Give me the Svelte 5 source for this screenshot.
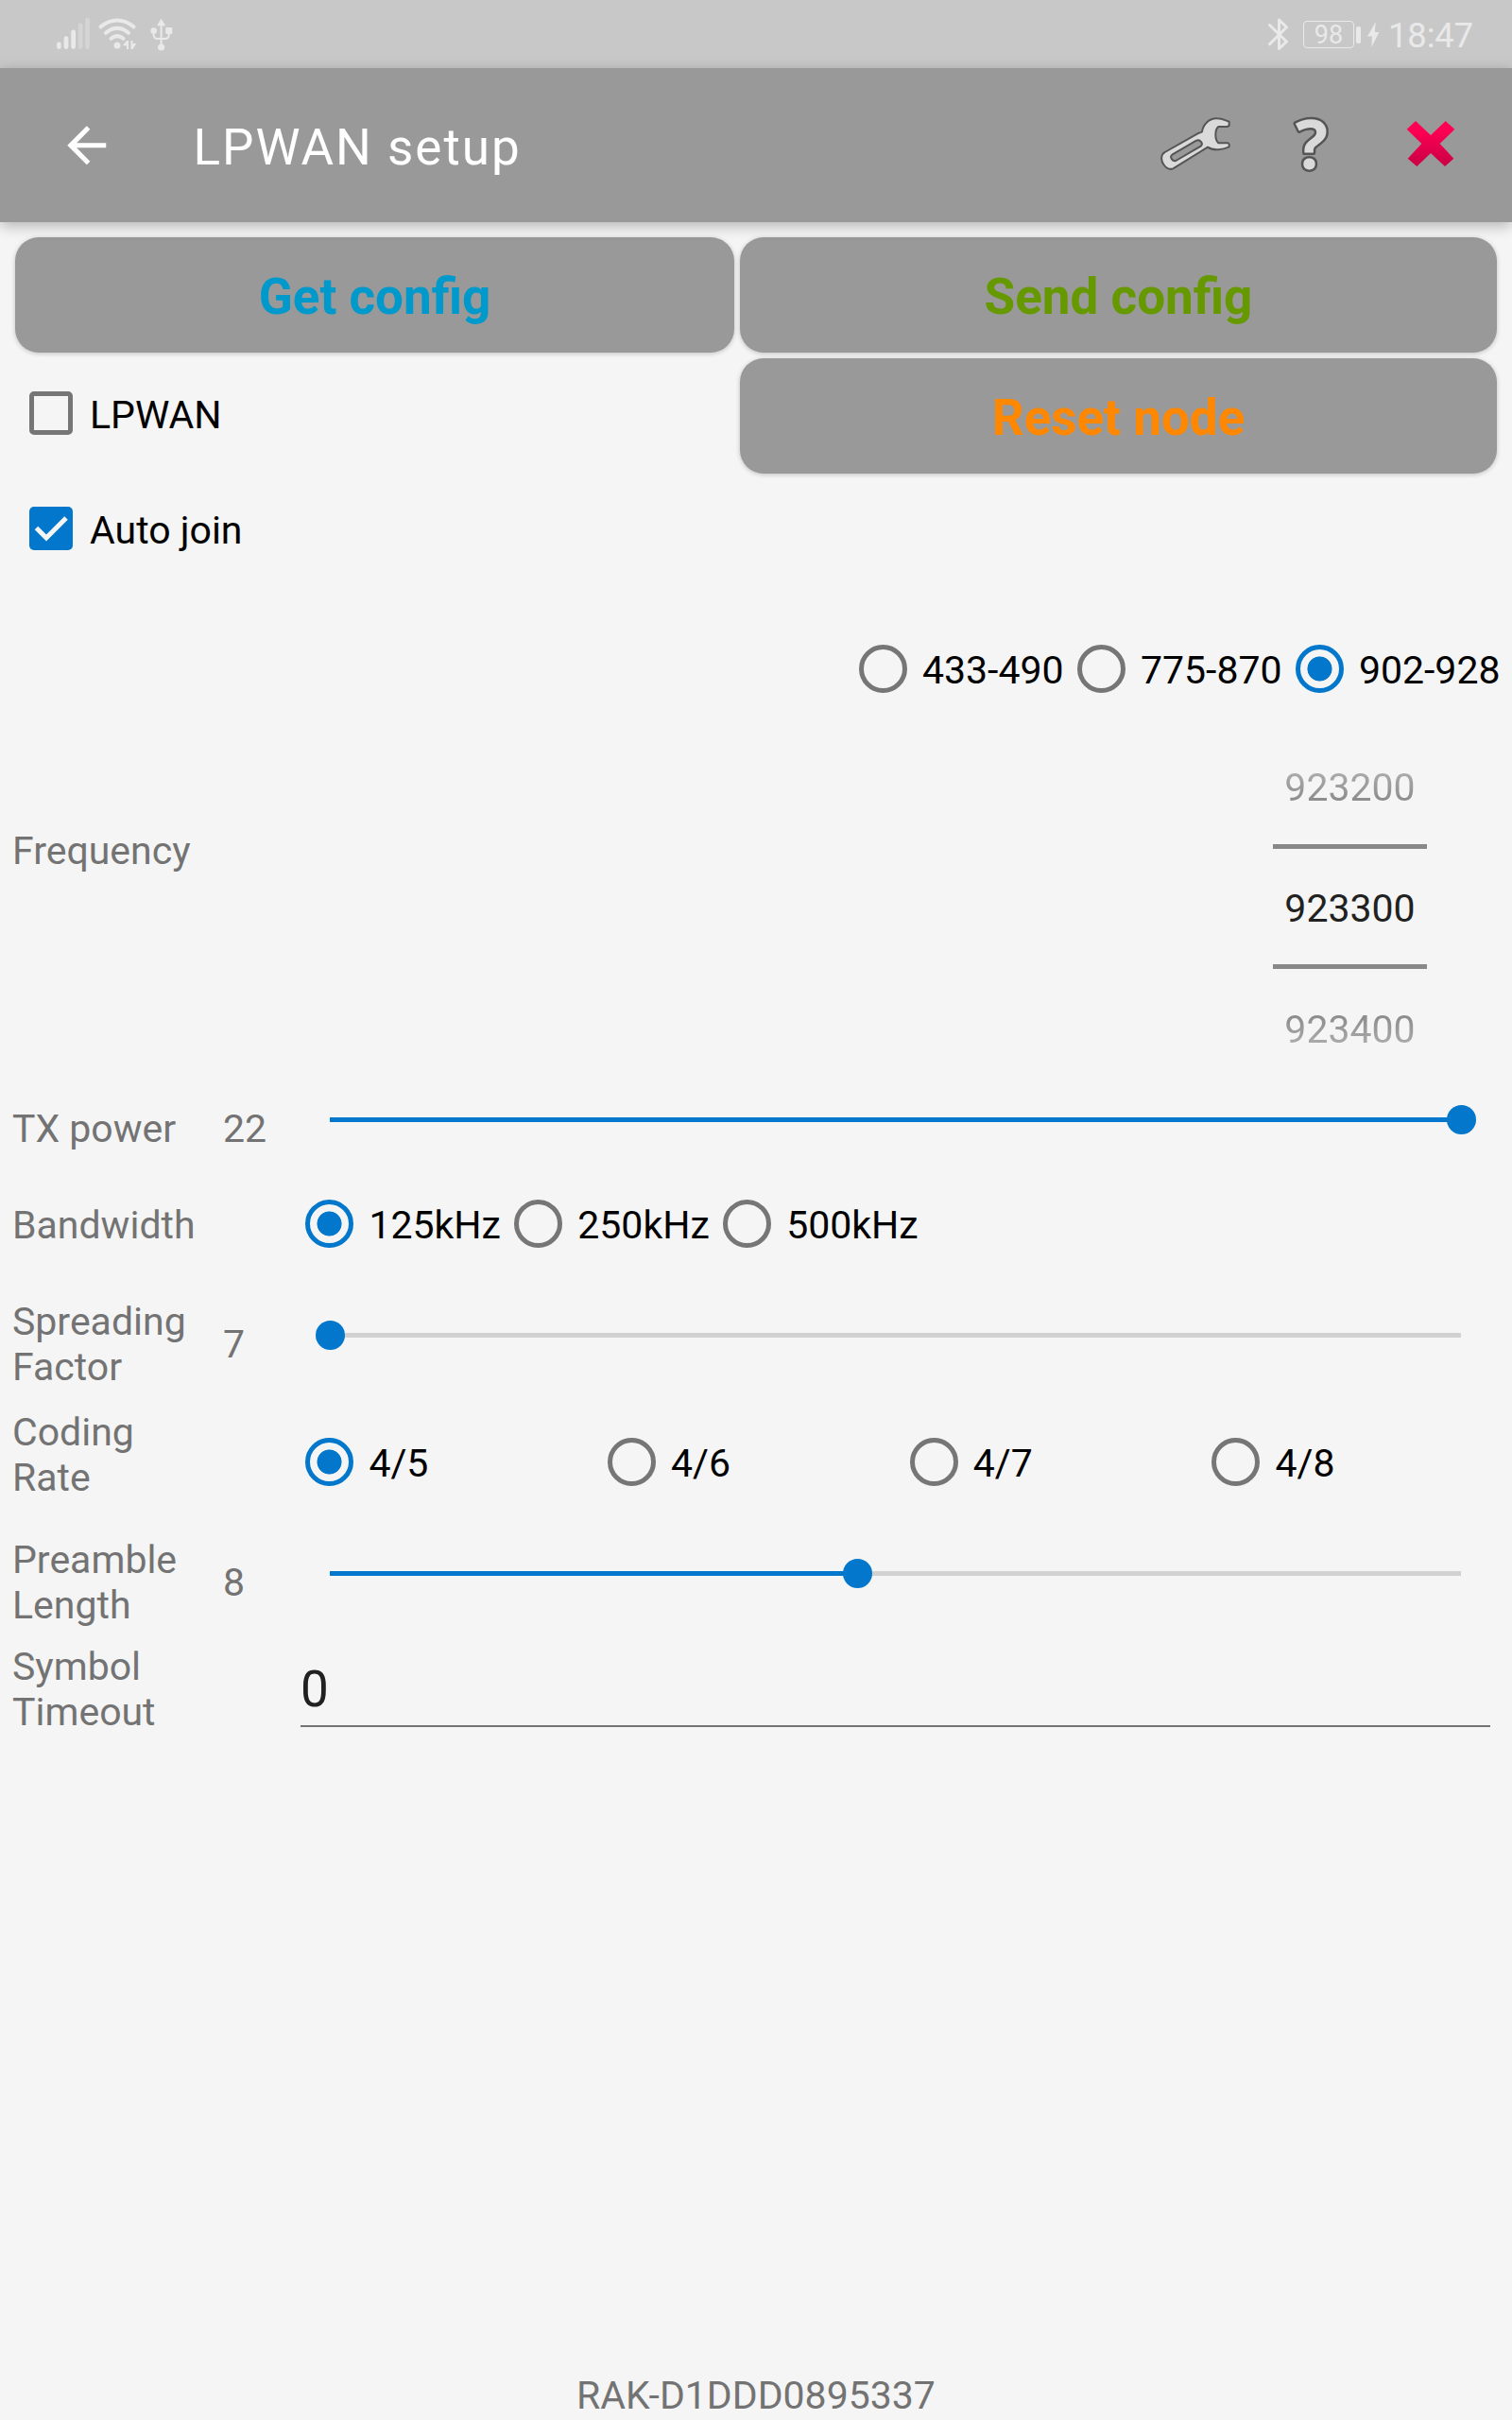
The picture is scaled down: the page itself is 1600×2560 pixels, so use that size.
<script>
  const bands = ['433-490', '775-870', '902-928'];
  const bandwidths = ['125kHz', '250kHz', '500kHz'];
  const rates = ['4/5', '4/6', '4/7', '4/8'];

  let lpwan = $state(false);
  let autoJoin = $state(true);
  let band = $state('902-928');
  let bandwidth = $state('125kHz');
  let rate = $state('4/5');
  let txPower = $state(22);
  let spreading = $state(7);
  let preamble = $state(8);

  const txFill = $derived((txPower / 22) * 100);
  const spreadingFill = $derived(((spreading - 7) / 5) * 100);
  const preambleFill = $derived(((preamble - 1) / 15) * 100);
</script>

{#snippet radio(label, on, pick)}
  <button class="radio" class:on onclick={pick}>
    <span class="ring"></span>
    <span class="caption">{label}</span>
  </button>
{/snippet}

{#snippet check(label, on, toggle)}
  <button class="check" class:on onclick={toggle}>
    <span class="box">
      {#if on}
        <svg width="46" height="46" viewBox="0 0 46 46"><path d="M7.5 22.5 18 33 39 12" fill="none" stroke="#f5f5f5" stroke-width="5" /></svg>
      {/if}
    </span>
    <span class="caption">{label}</span>
  </button>
{/snippet}

{#snippet slider(fill)}
  <div class="slider">
    <div class="track"><div class="fill" style:width="{fill}%"></div></div>
    <div class="thumb" style:left="{fill}%"></div>
  </div>
{/snippet}

<div class="screen">
  <header class="status">
    <svg width="200" height="72" viewBox="0 0 200 72" fill="none" stroke="#e9e9e9" stroke-linecap="round">
      <g stroke-width="4.8">
        <path d="M62.4 47v2.6M70 40.7v8.9M77.6 34v15.6" />
        <path d="M85.1 27v22.6M92.6 21.4v28.2" stroke="#d5d5d5" />
      </g>
      <g stroke-width="4">
        <path d="M106.5 28.3Q124 14.8 141.5 28.3" />
        <path d="M112 34.8Q124 25 136 34.8" />
        <path d="M117.5 40.8Q124 35.5 130.5 40.8" />
      </g>
      <circle cx="124" cy="48" r="3.5" fill="#e9e9e9" stroke="none" />
      <path d="M136 43v9h-2v-3.5l-4-.5 4-5zM138.500 43v9h2l3.700-6h-3.700v-3z" fill="#e9e9e9" stroke="none" />
      <path d="M170.6 26v22M162.6 33v3.5q0 4.500 4.500 4.500h7.200q4.500 0 4.500-4.500v-3.500" stroke-width="2" />
      <g fill="#e9e9e9" stroke="none">
        <path d="M170.6 19.500l4.500 7.700h-9z" />
        <circle cx="170.6" cy="50" r="3.6" />
        <circle cx="162.7" cy="32.5" r="3.3" />
        <rect x="175.3" y="29" width="7" height="7" rx="1" />
      </g>
    </svg>
    <div class="status-right">
      <svg width="24" height="72" viewBox="1341 0 24 72" fill="none" stroke="#e9e9e9" stroke-width="3" stroke-linecap="round" stroke-linejoin="round">
        <path d="M1343.5 26.500 1361.500 44 1353.500 51.500V21l8 7.800-18 18" />
      </svg>
      <div class="battery">98</div>
      <div class="nub"></div>
      <svg width="14" height="72" viewBox="1446 0 14 72"><path d="M1455.800 23 1447 38.500h5l-.8 11.500 8.300-16h-4.700z" fill="#e9e9e9" /></svg>
      <time>18:47</time>
    </div>
  </header>

  <nav class="appbar">
    <svg class="back" width="61.5" height="61.5" viewBox="0 0 24 24"><path d="M20 11H7.830l5.590-5.590L12 4l-8 8 8 8 1.410-1.410L7.830 13H20z" fill="#fff" /></svg>
    <h1>LPWAN setup</h1>
    <svg class="wrench" width="80" height="64" viewBox="78 366 240 192" fill="#dadada" stroke="#555" stroke-width="6" stroke-linejoin="round">
      <path fill-rule="evenodd" d="M216 421C219 397 240 378 263 379C280 379 290 385 302 389V402L296 405H268C256 414 256 446 268 457H299L302 460V469C284 477 254 484 234 470L124 538C104 546 80 516 90 494Q92 489 98 486L206 425Q214 423 216 421ZM121 494L198 449C211 445 221 459 212 467L133 513C122 516 112 501 121 494Z" />
    </svg>
    <svg class="help" width="50" height="130" viewBox="0 0 50 130">
      <text x="26" y="89.5" text-anchor="middle">?</text>
    </svg>
    <svg class="close" width="52" height="50" viewBox="864 383 156 150">
      <defs>
        <linearGradient id="red" x1="0" y1="0" x2="0" y2="1"><stop offset="0.2" stop-color="#ff0055" /><stop offset="0.9" stop-color="#cf0045" /></linearGradient>
      </defs>
      <path d="M894 386 942 431 989 386 1018 412 971 458 1015 505 987 530 942 488 898 530 869 505 913 458 866 412Z" fill="url(#red)" />
    </svg>
  </nav>

  <main>
    <section class="actions">
      <div class="col left">
        <button class="action get">Get config</button>
        <div class="checks">
          {@render check('LPWAN', lpwan, () => (lpwan = !lpwan))}
          {@render check('Auto join', autoJoin, () => (autoJoin = !autoJoin))}
        </div>
      </div>
      <div class="col right">
        <button class="action send">Send config</button>
        <button class="action reset">Reset node</button>
      </div>
    </section>

    <section class="bands">
      {#each bands as b}
        {@render radio(b, band === b, () => (band = b))}
      {/each}
    </section>

    <section class="frequency">
      <span class="label">Frequency</span>
      <div class="picker">
        <div class="item prev"><span>923200</span></div>
        <div class="item current"><span>923300</span></div>
        <div class="item next"><span>923400</span></div>
      </div>
    </section>

    <section class="row tx">
      <span class="label">TX power</span>
      <span class="value">{txPower}</span>
      {@render slider(txFill)}
    </section>
    <section class="row bandwidth">
      <span class="label">Bandwidth</span>
      <div class="radios">
        {#each bandwidths as b}
          {@render radio(b, bandwidth === b, () => (bandwidth = b))}
        {/each}
      </div>
    </section>
    <section class="row spreading">
      <span class="label">Spreading Factor</span>
      <span class="value">{spreading}</span>
      {@render slider(spreadingFill)}
    </section>
    <section class="row coding">
      <span class="label">Coding<br />Rate</span>
      <div class="radios even">
        {#each rates as r}
          {@render radio(r, rate === r, () => (rate = r))}
        {/each}
      </div>
    </section>
    <section class="row preamble">
      <span class="label">Preamble Length</span>
      <span class="value">{preamble}</span>
      {@render slider(preambleFill)}
    </section>
    <section class="row symbol">
      <span class="label">Symbol Timeout</span>
      <div class="field">0</div>
    </section>
  </main>

  <footer>RAK-D1DDD0895337</footer>
</div>

<style>
  :global(body) {
    margin: 0;
    background: #f5f5f5;
  }
  .screen {
    width: 1600px;
    height: 2560px;
    display: flex;
    flex-direction: column;
    overflow: hidden;
    background: #f5f5f5;
    color: #737373;
    font: 41px/48px Roboto, sans-serif;
  }
  button {
    border: 0;
    padding: 0;
    background: none;
    font: inherit;
    color: #000;
    text-align: left;
  }
  svg {
    display: block;
    flex: none;
  }

  .status {
    flex: none;
    height: 72px;
    display: flex;
    justify-content: space-between;
    background: #c8c8c8;
    color: #e9e9e9;
  }
  .status-right {
    display: flex;
    align-items: center;
    padding-right: 42px;
  }
  .battery {
    box-sizing: border-box;
    width: 54px;
    height: 29px;
    margin: 1px 2px 0 14px;
    border: 1.5px solid #e9e9e9;
    border-radius: 4px;
    font-size: 27px;
    line-height: 28px;
    text-align: center;
  }
  .nub {
    width: 5px;
    height: 18px;
    margin: 1px 6px 0 0;
    border-radius: 2px;
    background: #e9e9e9;
  }
  time {
    width: 89px;
    margin: 4px 0 0 9px;
    font-size: 36.5px;
    letter-spacing: -0.2px;
    white-space: nowrap;
  }

  .appbar {
    flex: none;
    height: 163px;
    display: flex;
    align-items: center;
    background: #999;
    box-shadow: 0 4px 14px rgba(0, 0, 0, 0.27);
    position: relative;
  }
  .back {
    margin-left: 61px;
  }
  h1 {
    flex: 1;
    margin: 5px 0 0 82px;
    font-size: 53px;
    line-height: 62px;
    font-weight: 400;
    letter-spacing: 2px;
    color: #fff;
  }
  .help {
    margin-left: 56px;
  }
  .help text {
    font: 700 72px 'Open Sans', sans-serif;
    fill: #dadada;
    stroke: #555;
    stroke-width: 5px;
    stroke-linejoin: round;
    paint-order: stroke;
  }
  .wrench {
    margin-top: -1px;
  }
  .close {
    margin: -3px 60px 0 76px;
  }

  .actions {
    display: flex;
    gap: 6px;
    height: 385px;
    padding: 16px 16px 0;
  }
  .col {
    display: flex;
    flex-direction: column;
    gap: 6px;
  }
  .left {
    width: 761px;
  }
  .right {
    width: 801px;
  }
  .action {
    height: 122px;
    padding-top: 3px;
    border-radius: 25px;
    background: #999;
    box-shadow: 0 1px 5px rgba(0, 0, 0, 0.22);
    font-size: 53px;
    font-weight: 700;
    text-align: center;
  }
  .get {
    color: #0099cc;
  }
  .send {
    color: #669900;
  }
  .reset {
    color: #ff8800;
  }
  .checks {
    margin-top: -3px;
    padding-left: 15px;
  }
  .check {
    height: 122px;
    display: flex;
    align-items: center;
    gap: 18px;
  }
  .box {
    box-sizing: border-box;
    width: 46px;
    height: 46px;
    border: 5px solid #767676;
    border-radius: 5px;
  }
  .check.on .box {
    border: 0;
    background: #0277cb;
  }
  .caption {
    padding-top: 4px;
    white-space: nowrap;
  }

  .bands {
    height: 124px;
    margin-top: 9px;
    padding-right: 12.5px;
    display: flex;
    justify-content: flex-end;
    align-items: center;
  }
  .radio {
    height: 51px;
    display: flex;
    align-items: center;
    gap: 16px;
  }
  .radio + .radio {
    margin-left: 14.4px;
  }
  .ring {
    box-sizing: border-box;
    width: 51px;
    height: 51px;
    border: 5px solid #767676;
    border-radius: 50%;
  }
  .radio.on .ring {
    border-color: #0277cb;
    background: radial-gradient(circle, #0277cb 12.6px, transparent 13.4px);
  }

  .frequency {
    height: 384px;
    display: flex;
    justify-content: space-between;
    padding: 0 90px 0 13px;
  }
  .frequency .label {
    padding-top: 107px;
  }
  .picker {
    width: 163px;
    text-align: center;
  }
  .item {
    box-sizing: border-box;
    height: 128px;
    padding-top: 40px;
  }
  .item span {
    display: block;
  }
  .prev,
  .current {
    border-bottom: 5px solid #888;
  }
  .prev {
    height: 129px;
  }
  .current {
    height: 127px;
    padding-top: 39px;
    color: #212121;
  }
  .prev span,
  .next span {
    color: transparent;
    background: linear-gradient(#b4b4b4, #828282);
    background-clip: text;
  }
  .next span {
    background: linear-gradient(#828282, #b4b4b4);
    background-clip: text;
  }

  .row {
    box-sizing: border-box;
    display: grid;
    grid-template-columns: 223px 1fr;
    align-items: start;
    padding: 9px 0 0 13px;
  }
  .row:has(.value) {
    grid-template-columns: 223px 113px 1197px;
  }
  .row .label {
    max-width: 205px;
  }
  .tx {
    height: 92px;
    padding-top: 17px;
  }
  .bandwidth {
    height: 120px;
    padding-top: 27px;
  }
  .spreading {
    height: 117px;
  }
  .coding {
    height: 135px;
  }
  .preamble {
    height: 113px;
  }
  .symbol {
    height: 110px;
    grid-template-columns: 305px 1259px;
  }
  .spreading .value,
  .preamble .value {
    padding-top: 24px;
  }
  .slider {
    position: relative;
    height: 31px;
    display: flex;
    align-items: center;
    margin-top: 23px;
  }
  .tx .slider {
    margin-top: -1px;
  }
  .track {
    flex: 1;
    height: 5px;
    background: #d1d1d1;
  }
  .fill {
    height: 5px;
    background: #0277cb;
  }
  .thumb {
    position: absolute;
    top: 0;
    width: 31px;
    height: 31px;
    margin-left: -15.5px;
    border-radius: 50%;
    background: #0277cb;
  }
  .radios {
    display: flex;
    margin: -3.5px 0 0 87.4px;
  }
  .coding .radios {
    margin-top: 29.5px;
  }
  .radios.even .radio {
    width: 319.7px;
    margin: 0;
  }
  .field {
    height: 69px;
    padding-top: 17px;
    border-bottom: 2.5px solid #737373;
    color: #212121;
    font-size: 53px;
    line-height: 62px;
  }

  footer {
    margin-top: auto;
    padding-bottom: 2px;
    text-align: center;
  }
</style>
